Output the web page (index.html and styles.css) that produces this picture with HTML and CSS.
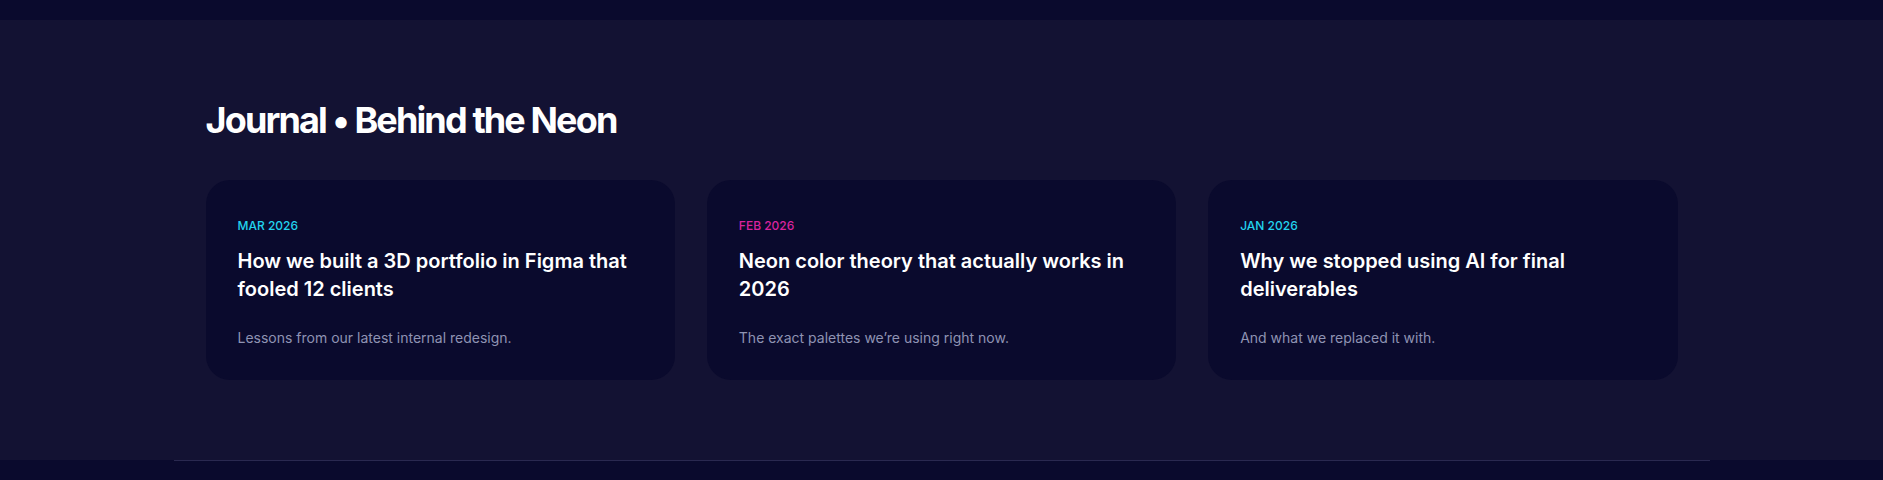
FILE: index.html
```html
<!DOCTYPE html>
<html lang="en">
<head>
    <meta charset="UTF-8">
    <meta name="viewport" content="width=device-width, initial-scale=1.0">
    <title>Journal • Behind the Neon</title>
    <link rel="stylesheet" href="styles.css">
</head>
<body>

    <div class="top-band"></div>

    <section class="journal">
        <div class="container">
            <h2 class="journal-title">Journal • Behind the Neon</h2>

            <div class="post-grid">
                <article class="post-card">
                    <div class="post-date cyan">MAR 2026</div>
                    <h3 class="post-title">How we built a 3D portfolio in Figma that fooled 12 clients</h3>
                    <p class="post-text">Lessons from our latest internal redesign.</p>
                </article>

                <article class="post-card">
                    <div class="post-date pink">FEB 2026</div>
                    <h3 class="post-title">Neon color theory that actually works in 2026</h3>
                    <p class="post-text">The exact palettes we’re using right now.</p>
                </article>

                <article class="post-card">
                    <div class="post-date cyan">JAN 2026</div>
                    <h3 class="post-title">Why we stopped using AI for final deliverables</h3>
                    <p class="post-text">And what we replaced it with.</p>
                </article>
            </div>
        </div>
    </section>

    <footer class="footer">
        <div class="footer-inner"></div>
    </footer>

</body>
</html>
```

FILE: styles.css
```css
* {
    box-sizing: border-box;
}

body {
    margin: 0;
    background-color: #0a0a2d;
    font-family: Inter, "Noto Sans", sans-serif;
    color: #fff;
}

.top-band {
    height: 20px;
}

.journal {
    background-color: #131233;
    padding: 80px 0;
}

.container {
    max-width: 1536px;
    margin: 0 auto;
    padding: 0 32px;
}

.journal-title {
    margin: 0 0 40px;
    font-size: 36px;
    line-height: 40px;
    font-weight: 700;
    letter-spacing: -0.052em;
}

.post-grid {
    display: grid;
    grid-template-columns: repeat(3, 1fr);
    gap: 32px;
}

.post-card {
    background-color: #0a0a2d;
    border-radius: 24px;
    padding: 38px 32px 32px;
    height: 200px;
}

.post-date {
    font-size: 12px;
    line-height: 16px;
    font-weight: 500;
}

.cyan {
    color: #22d3ee;
}

.pink {
    color: #d9239d;
}

.post-title {
    margin: 13px 0 0;
    font-size: 20px;
    line-height: 28px;
    font-weight: 600;
}

.post-text {
    margin: 25px 0 0;
    font-size: 14px;
    line-height: 20px;
    color: #8f93b3;
}

.footer-inner {
    max-width: 1536px;
    margin: 0 auto;
    border-top: 1px solid #2a2950;
    height: 20px;
}
```
